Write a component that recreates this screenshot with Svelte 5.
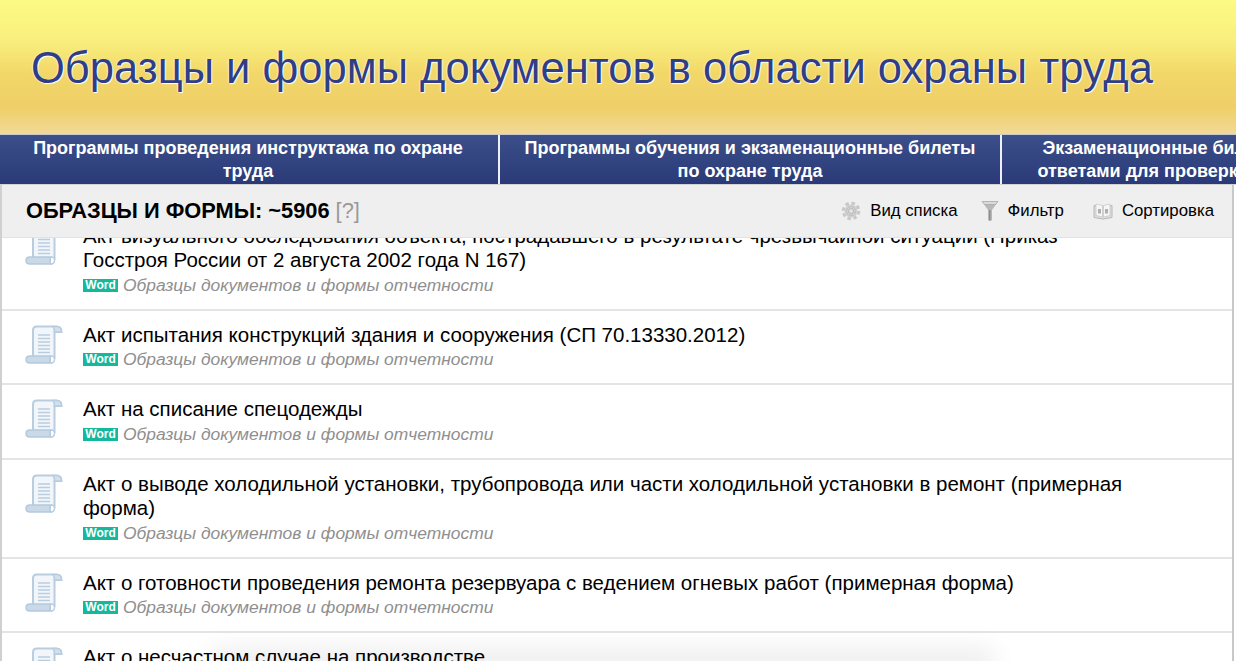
<script>
  const tabs = [
    'Программы проведения инструктажа по охране труда',
    'Программы обучения и экзаменационные билеты по охране труда',
    'Экзаменационные билеты для охраны труда с ответами для проверки знаний по охране труда'
  ];
  const rows = [
    'Акт визуального обследования объекта, пострадавшего в результате чрезвычайной ситуации (Приказ Госстроя России от 2 августа 2002 года N 167)',
    'Акт испытания конструкций здания и сооружения (СП 70.13330.2012)',
    'Акт на списание спецодежды',
    'Акт о выводе холодильной установки, трубопровода или части холодильной установки в ремонт (примерная форма)',
    'Акт о готовности проведения ремонта резервуара с ведением огневых работ (примерная форма)',
    'Акт о несчастном случае на производстве'
  ];
</script>

<div class="page">
  <header class="banner"><h1>Образцы и формы документов в области охраны труда</h1></header>
  <nav class="tabs">
    {#each tabs as t}<a class="tab" href="#top">{t}</a>{/each}
  </nav>
  <section class="panel">
    <div class="bar">
      <h2>ОБРАЗЦЫ И ФОРМЫ: ~5906 <span class="q">[?]</span></h2>
      <div class="tools">
        <span class="tool">
          <svg width="20" height="20" viewBox="0 0 20 20"><circle cx="10" cy="10" r="7.600" fill="none" stroke="#c8c8c8" stroke-width="3.400" stroke-dasharray="3.400 2.600"/><circle cx="10" cy="10" r="6.600" fill="#d2d2d2"/><circle cx="10" cy="10" r="4.500" fill="none" stroke="#b2b2b2" stroke-dasharray="1.500 1"/><circle cx="10" cy="10" r="2.400" fill="#e8e8e8" stroke="#b4b4b4"/></svg>
          Вид списка
        </span>
        <span class="tool">
          <svg width="18" height="22" viewBox="0 0 18 22"><path d="M1 1.500h16l-6 8.500v10.500h-4V10z" fill="#b8b8b8"/><path d="M1 1.500h16l-2.500 3h-11z" fill="#dadada" stroke="#a0a0a0" stroke-width=".6"/><path d="M8 10h1.500v10.500H8z" fill="#8e8e8e"/></svg>
          Фильтр
        </span>
        <span class="tool last">
          <svg width="20" height="20" viewBox="0 0 20 20"><path d="M1 4.500l9 1.500 9-1.500v12l-9 1.500-9-1.500z" fill="#dedede" stroke="#b8b8b8"/><path d="M3 3l6.500 1.500v11.500l-6.500-1.500zM17 3l-6.500 1.500v11.500l6.500-1.500z" fill="#f6f6f6" stroke="#c4c4c4" stroke-width=".7"/><path d="M5 8h3v4.500h-3zM12 8h3v4.500h-3z" fill="#9e9e9e" opacity=".8"/></svg>
          Сортировка
        </span>
      </div>
    </div>
    <div class="viewport">
      <ul class="list">
        {#each rows as r}
          <li class="row">
            <svg class="scroll" width="38" height="40" viewBox="0 0 38 40">
              <path d="M8 31V5.500Q8 1.500 12 1.500H31.500Q36.500 1.500 36.500 7H29.500V34" fill="#f2f6fa" stroke="#b9cde0" stroke-width="2"/>
              <path d="M28 1.500Q29.500 3.500 29.500 7H36.500Q36.500 1.500 31.500 1.500z" fill="#d3e0ec" stroke="#b9cde0" stroke-width="1.500"/>
              <path d="M13 10h12M13 13.500h12M13 17h12M13 20.500h12M13 24h12M13 27.500h12" stroke="#b9cde0" stroke-width="1.500"/>
              <path d="M5 31H26Q24 34.500 26 38H5Q1 38 1 34.500T5 31z" fill="#c9d9e8" stroke="#b4c9dd" stroke-width="1.500"/>
              <path d="M26 31Q29.500 31 29.500 34Q29.500 38 26 38" fill="#fff" stroke="#b9cde0" stroke-width="1.500"/>
            </svg>
            <div class="body">
              <div class="title">{r}</div>
              <div class="meta"><span class="badge">Word</span> <em>Образцы документов и формы отчетности</em></div>
            </div>
          </li>
        {/each}
      </ul>
      <div class="fade"></div>
    </div>
  </section>
</div>

<style>
  :global(body) { margin: 0; background: #fff; }
  .page { height: 661px; overflow: hidden; font-family: "Liberation Sans", Arial, sans-serif; color: #000; }
  .banner {
    height: 134px; box-sizing: border-box; padding: 43px 0 0 31px;
    background: linear-gradient(#fcfb84 0%, #f9ef7e 30%, #f2d768 55%, #efcf68 80%, #f2d997 100%);
  }
  h1 { margin: 0; font-size: 43.550px; line-height: 50px; font-weight: 400; color: #2f3e85; text-shadow: 1px 1px 1px #fff, -1px 0 1px rgba(255,255,255,.6); white-space: nowrap; }
  .tabs { display: flex; gap: 2px; height: 51px; box-sizing: border-box; overflow: hidden; margin-left: -2px; border-top: 1px solid #c9c9c9; border-bottom: 1px solid #d4d4d4; background: #eef0f8; }
  .tab {
    flex: 0 0 500px; box-sizing: border-box; padding: 2px 21px 0; text-align: center; text-decoration: none;
    color: #fff; font-weight: 700; font-size: 18px; line-height: 23px;
    background: linear-gradient(#3b4f8a, #2a3a78);
  }
  .panel { margin-right: 2px; border-left: 2px solid #d0d0d0; border-right: 2px solid #c8c8c8; }
  .bar { height: 53px; box-sizing: border-box; background: #efefef; border-bottom: 1px solid #e2e2e2; display: flex; align-items: center; justify-content: space-between; padding: 0 18px 0 24px; }
  h2 { margin: 0; font-size: 21.800px; font-weight: 700; }
  .q { color: #999; font-weight: 400; }
  .tools { display: flex; gap: 23px; }
  .tool { display: flex; align-items: center; gap: 9px; font-size: 16.800px; }
  .tool.last { margin-left: 6px; }
  .viewport { position: relative; height: 423px; overflow: hidden; }
  .list { list-style: none; margin: -26.300px 0 0; padding: 0; }
  .row { display: flex; gap: 20px; padding: 12px 8px 12px 23px; border-bottom: 2px solid #e4e4e4; }
  .scroll { flex: none; margin-top: 2px; }
  .body { max-width: 1060px; }
  .title { font-size: 20.500px; line-height: 24.500px; }
  .meta { font-size: 17.400px; line-height: 24px; display: flex; align-items: center; gap: 5px; color: #8f8f8f; }
  .badge { background: #14b89c; color: #fff; font-size: 12px; font-weight: 700; line-height: 13px; width: 35px; text-align: center; margin-top: 1px; }
  .fade { position: absolute; left: 220px; width: 760px; bottom: -8px; height: 8px; box-shadow: 0 -2px 24px 12px rgba(0,0,0,.065); }
</style>
